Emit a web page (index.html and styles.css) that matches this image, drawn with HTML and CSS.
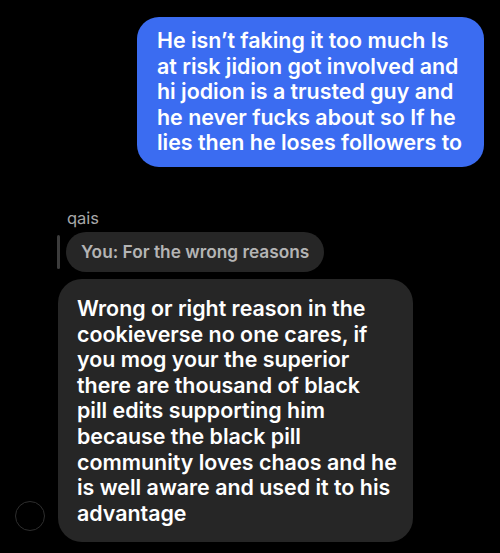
FILE: index.html
```html
<!DOCTYPE html>
<html>
<head>
<meta charset="utf-8">
<link rel="stylesheet" href="styles.css">
</head>
<body>
<div class="thread">
  <div class="row-out">
    <div class="bubble-out">He isn’t faking it too much Is<br>at risk jidion got involved and<br>hi jodion is a trusted guy and<br>he never fucks about so If he<br>lies then he loses followers to</div>
  </div>
  <div class="incoming">
    <div class="avatar-col"><div class="avatar"></div></div>
    <div class="content">
      <div class="name">qais</div>
      <div class="reply">
        <div class="reply-bar"></div>
        <div class="reply-bubble">You: For the wrong reasons</div>
      </div>
      <div class="bubble-in">Wrong or right reason in the<br>cookieverse no one cares, if<br>you mog your the superior<br>there are thousand of black<br>pill edits supporting him<br>because the black pill<br>community loves chaos and he<br>is well aware and used it to his<br>advantage</div>
    </div>
  </div>
</div>
</body>
</html>
```
FILE: styles.css
```css
html, body {
  margin: 0;
  padding: 0;
  background: #000;
}
body {
  width: 500px;
  height: 553px;
  overflow: hidden;
  font-family: "Inter", "Roboto", sans-serif;
  -webkit-font-smoothing: antialiased;
}
.thread {
  padding-top: 17px;
  display: flex;
  flex-direction: column;
}
.row-out {
  display: flex;
  justify-content: flex-end;
  padding-right: 16px;
}
.bubble-out {
  background: #3b6cf1;
  color: #fff;
  font-size: 21.4px;
  font-weight: 600;
  line-height: 25.6px;
  padding: 11px 20px 11px 20px;
  border-radius: 22px;
  width: 307px;
  white-space: nowrap;
}
.incoming {
  display: flex;
  margin-top: 41px;
}
.avatar-col {
  width: 58px;
  display: flex;
  align-items: flex-end;
  justify-content: flex-start;
  padding-left: 15px;
  box-sizing: border-box;
  padding-bottom: 11px;
}
.avatar {
  width: 28px;
  height: 28px;
  border-radius: 50%;
  border: 1px solid #2e2e2e;
}
.content {
  display: flex;
  flex-direction: column;
  align-items: flex-start;
}
.name {
  color: #a8a8a8;
  font-size: 16.5px;
  line-height: 20px;
  margin-left: 9px;
  margin-bottom: 4px;
}
.reply {
  display: flex;
  align-items: center;
  gap: 6px;
}
.reply-bar {
  width: 3px;
  height: 34px;
  background: #3c3c3c;
  border-radius: 2px;
  margin-left: -1px;
}
.reply-bubble {
  background: #262626;
  color: #b4b4b4;
  font-size: 17.3px;
  font-weight: 600;
  height: 40px;
  line-height: 40px;
  padding: 0 15px;
  border-radius: 20px;
  white-space: nowrap;
}
.bubble-in {
  margin-top: 7px;
  background: #262626;
  color: #fff;
  font-size: 21.4px;
  font-weight: 600;
  line-height: 25.6px;
  padding: 17px 19px 16px;
  border-radius: 24px;
  width: 317px;
  white-space: nowrap;
}
```
